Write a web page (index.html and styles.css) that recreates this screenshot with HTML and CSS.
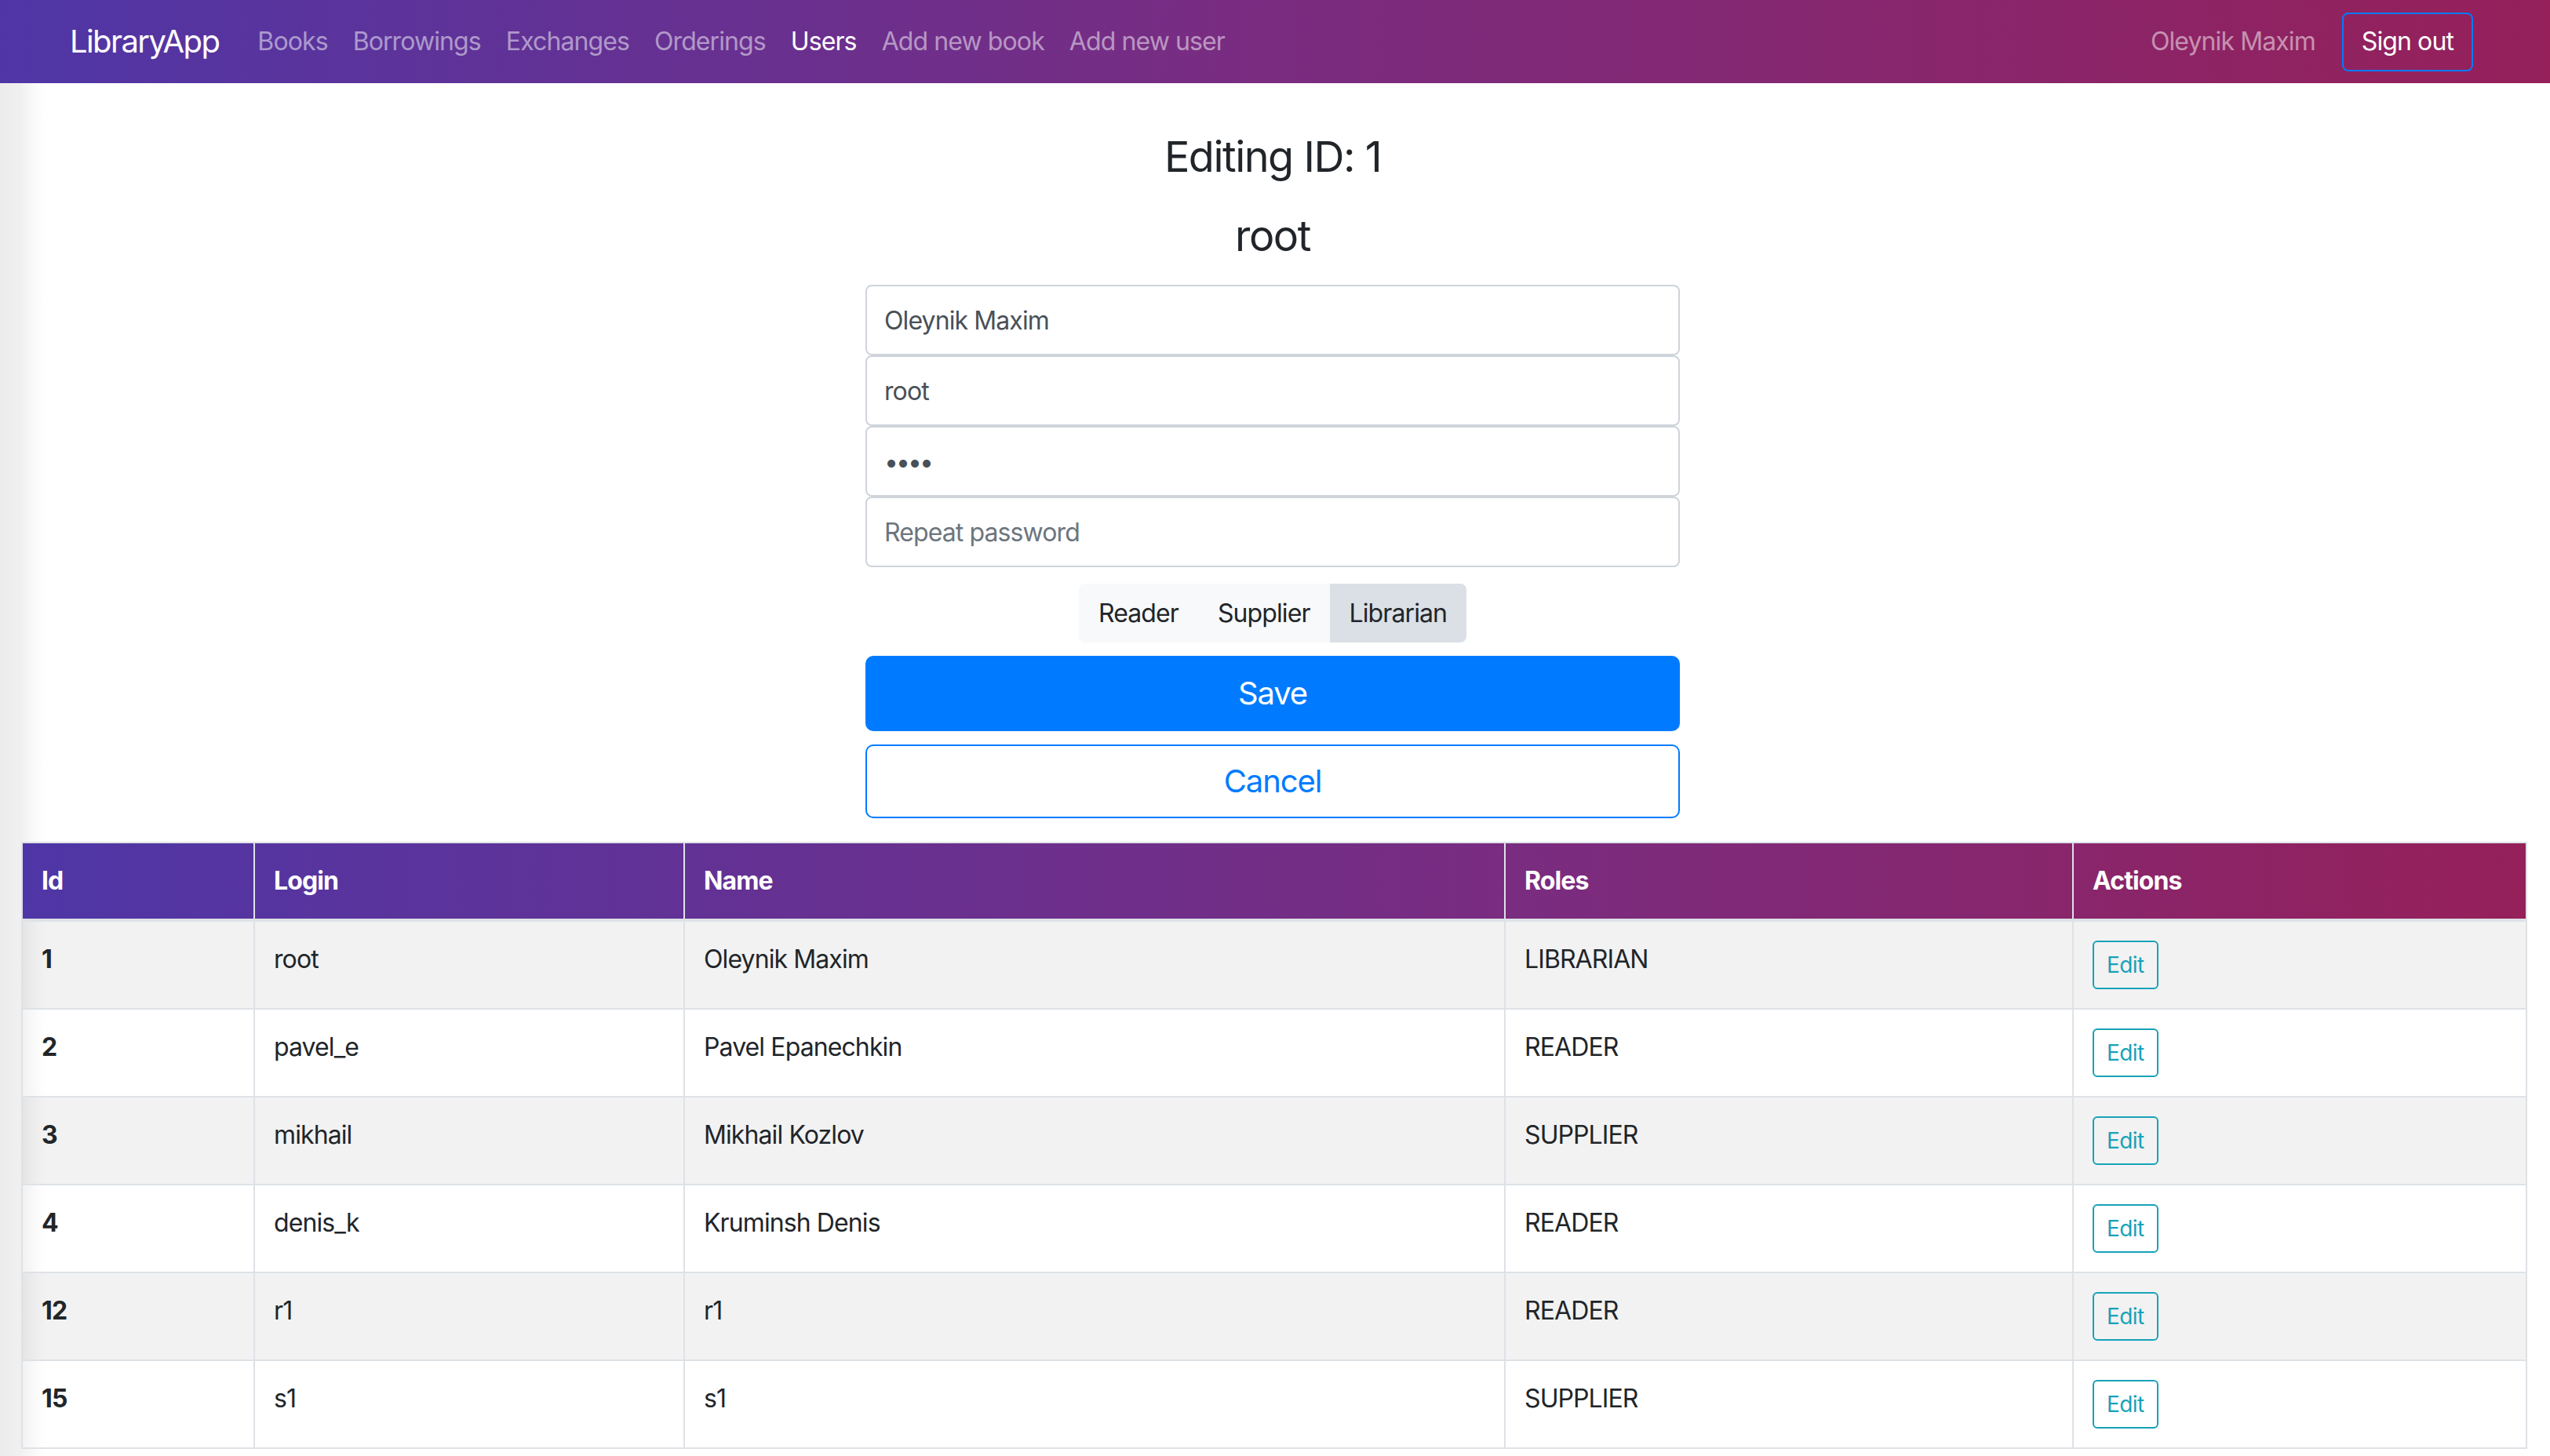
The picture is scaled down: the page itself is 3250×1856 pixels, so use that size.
FILE: index.html
```html
<!DOCTYPE html>
<html lang="en">
<head>
<meta charset="utf-8">
<title>LibraryApp</title>
<link rel="stylesheet" href="styles.css">
</head>
<body>
<nav class="navbar">
  <a class="brand" href="#">LibraryApp</a>
  <ul class="nav-links">
    <li><a class="nav-link" href="#">Books</a></li>
    <li><a class="nav-link" href="#">Borrowings</a></li>
    <li><a class="nav-link" href="#">Exchanges</a></li>
    <li><a class="nav-link" href="#">Orderings</a></li>
    <li><a class="nav-link active" href="#">Users</a></li>
    <li><a class="nav-link" href="#">Add new book</a></li>
    <li><a class="nav-link" href="#">Add new user</a></li>
  </ul>
  <div class="nav-right">
    <span class="nav-user">Oleynik Maxim</span>
    <button class="btn-signout" type="button">Sign out</button>
  </div>
</nav>

<main class="editor">
  <h3 class="title">Editing ID: 1</h3>
  <h3 class="subtitle">root</h3>
  <form class="edit-form">
    <input class="field" type="text" value="Oleynik Maxim">
    <input class="field" type="text" value="root">
    <input class="field pass" type="password" value="1234">
    <input class="field" type="password" placeholder="Repeat password">
    <div class="role-row">
      <div class="role-group">
        <button class="role-btn" type="button">Reader</button>
        <button class="role-btn" type="button">Supplier</button>
        <button class="role-btn selected" type="button">Librarian</button>
      </div>
    </div>
    <button class="btn-save" type="button">Save</button>
    <button class="btn-cancel" type="button">Cancel</button>
  </form>
</main>

<section class="table-wrap">
  <table class="users">
    <colgroup>
      <col class="c-id"><col class="c-login"><col class="c-name"><col class="c-roles"><col class="c-actions">
    </colgroup>
    <thead>
      <tr><th>Id</th><th>Login</th><th>Name</th><th>Roles</th><th>Actions</th></tr>
    </thead>
    <tbody>
      <tr><th>1</th><td>root</td><td>Oleynik Maxim</td><td>LIBRARIAN</td><td><button class="btn-edit" type="button">Edit</button></td></tr>
      <tr><th>2</th><td>pavel_e</td><td>Pavel Epanechkin</td><td>READER</td><td><button class="btn-edit" type="button">Edit</button></td></tr>
      <tr><th>3</th><td>mikhail</td><td>Mikhail Kozlov</td><td>SUPPLIER</td><td><button class="btn-edit" type="button">Edit</button></td></tr>
      <tr><th>4</th><td>denis_k</td><td>Kruminsh Denis</td><td>READER</td><td><button class="btn-edit" type="button">Edit</button></td></tr>
      <tr><th>12</th><td>r1</td><td>r1</td><td>READER</td><td><button class="btn-edit" type="button">Edit</button></td></tr>
      <tr><th>15</th><td>s1</td><td>s1</td><td>SUPPLIER</td><td><button class="btn-edit" type="button">Edit</button></td></tr>
    </tbody>
  </table>
</section>
</body>
</html>
```

FILE: styles.css
```css
* { box-sizing: border-box; }

html, body { height: 100%; }

body {
  margin: 0;
  font-family: Inter, "Noto Sans", "Liberation Sans", sans-serif;
  font-size: 32px;
  line-height: 1.5;
  letter-spacing: -0.9px;
  color: #212529;
  background: linear-gradient(to right, #ececec 0px, #f0f0f0 26px, #f8f8f8 40px, #ffffff 58px);
  overflow: hidden;
}

/* NAVBAR */
.navbar {
  height: 106px;
  display: flex;
  align-items: center;
  padding: 0 98px 0 89px;
  background: linear-gradient(to right, #4f36a6 0%, #7a2c80 50%, #95205a 100%);
}

.brand {
  font-size: 40px;
  line-height: 60px;
  letter-spacing: -1.6px;
  color: #fff;
  text-decoration: none;
  margin-right: 33px;
}

.nav-links {
  display: flex;
  list-style: none;
  margin: 0;
  padding: 0;
  flex: 1;
}

.nav-link {
  display: block;
  padding: 0 16px;
  color: rgba(255, 255, 255, 0.5);
  text-decoration: none;
  line-height: 48px;
}

.nav-link.active { color: #fff; }

.nav-right {
  display: flex;
  align-items: center;
}

.nav-user {
  color: rgba(255, 255, 255, 0.5);
  margin-right: 34px;
}

.btn-signout {
  height: 75px;
  padding: 0 23px;
  border: 2px solid #007bff;
  border-radius: 8px;
  background: transparent;
  color: #fff;
  font: inherit;
  font-size: 32px;
  letter-spacing: -0.9px;
}

/* EDITOR */
.editor {
  padding: 61px 6px 0 0;
}

.title, .subtitle {
  margin: 0;
  text-align: center;
  font-size: 54px;
  font-weight: 400;
  line-height: 65px;
  letter-spacing: -1.5px;
}

.title { margin-bottom: 36px; }
.subtitle { margin-bottom: 30px; }

.edit-form {
  width: 1038px;
  margin: 0 auto;
  display: flex;
  flex-direction: column;
}

.field {
  display: block;
  width: 100%;
  height: 90px;
  padding: 0 22px;
  border: 2px solid #ced4da;
  border-radius: 8px;
  font: inherit;
  font-size: 32px;
  letter-spacing: -0.9px;
  color: #495057;
  background: #fff;
}

.field.pass { letter-spacing: -3px; }

.field::placeholder { color: #6c757d; }

.role-row {
  display: flex;
  justify-content: center;
  margin: 21px 0 17px;
}

.role-group {
  display: flex;
  background: #f8f9fa;
  border-radius: 8px;
  overflow: hidden;
}

.role-btn {
  height: 75px;
  padding: 0 25px;
  border: 0;
  background: #f8f9fa;
  color: #212529;
  font: inherit;
  font-size: 32px;
  letter-spacing: -0.9px;
}

.role-btn.selected { background: #dae0e5; }

.btn-save, .btn-cancel {
  width: 100%;
  height: 96px;
  border: 2px solid #007bff;
  border-radius: 10px;
  font: inherit;
  font-size: 40px;
  letter-spacing: -1.1px;
}

.btn-save {
  background: #007bff;
  color: #fff;
  margin-bottom: 17px;
}

.btn-cancel {
  background: #fff;
  color: #007bff;
  height: 94px;
}

/* TABLE */
.table-wrap {
  padding: 30px 31px 0 27px;
}

.users {
  width: 100%;
  border-collapse: collapse;
  table-layout: fixed;
  background: transparent;
}

.c-id { width: 296px; }
.c-login { width: 548px; }
.c-name { width: 1046px; }
.c-roles { width: 724px; }
.c-actions { width: 578px; }

.users th, .users td {
  border: 2px solid #dee2e6;
  padding: 24px;
  text-align: left;
  vertical-align: top;
  line-height: 48px;
}

.users thead tr {
  background: linear-gradient(to right, #4f36a6 0%, #7a2c80 60%, #95205a 100%);
}

.users thead th {
  color: #fff;
  font-weight: 700;
  border-bottom-width: 4px;
  border-color: #dee2e6;
  background: transparent;
}

.users tbody th { font-weight: 700; }

.users tbody tr:nth-child(odd) { background: rgba(0, 0, 0, 0.05); }

.users tbody td, .users tbody th { height: 110px; }

.btn-edit {
  display: block;
  height: 62px;
  padding: 0 16px;
  border: 2px solid #17a2b8;
  border-radius: 6px;
  background: transparent;
  color: #17a2b8;
  font: inherit;
  font-size: 28px;
  letter-spacing: -0.6px;
}
```
